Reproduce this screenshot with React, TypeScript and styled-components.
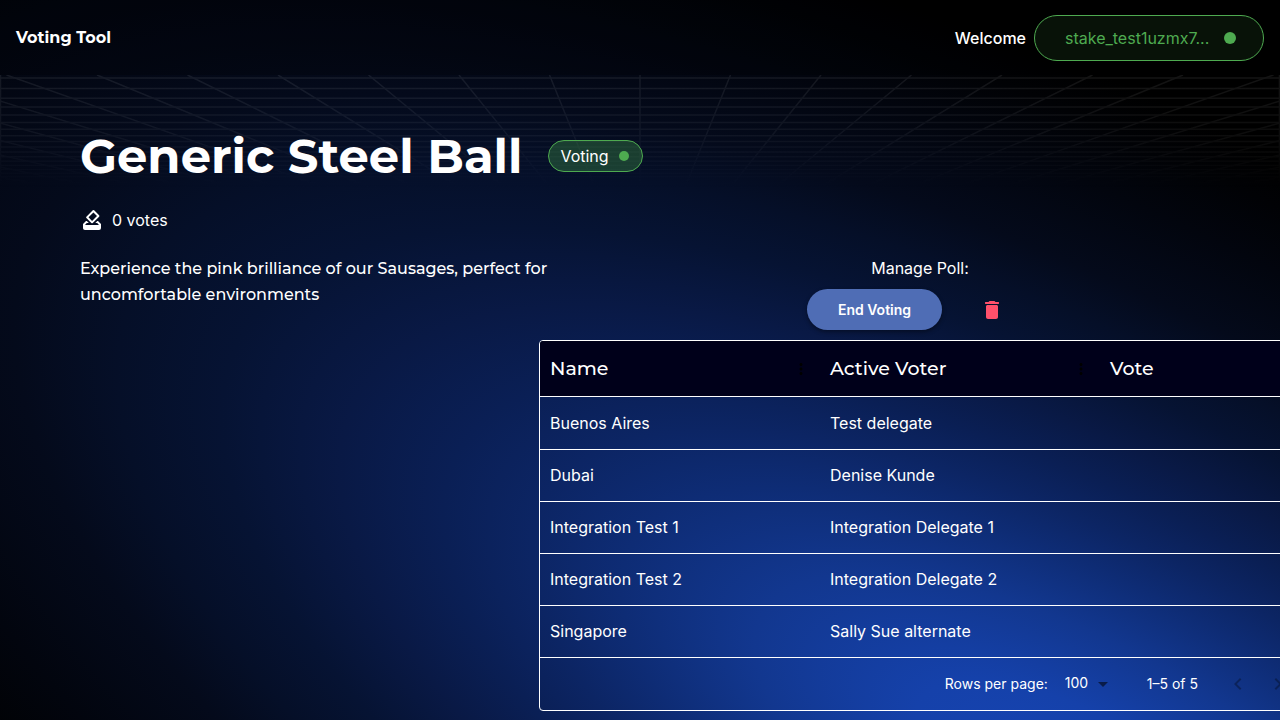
import React from 'react';
import styled, { createGlobalStyle } from 'styled-components';
import { MdHowToVote, MdChevronLeft, MdChevronRight, MdMoreVert } from 'react-icons/md';

const body = "Inter, 'Liberation Sans', sans-serif";
const display = "Montserrat, Inter, 'Liberation Sans', sans-serif";
const green = '#4eaa50';

const GlobalStyle = createGlobalStyle`
  *, *::before, *::after { box-sizing: border-box; }
  body {
    margin: 0;
    background: #000;
    color: #fff;
    font: 400 16px/24px ${body};
    overflow-x: hidden;
  }
  h1, p { margin: 0; }
  button, select { font: inherit; color: inherit; }
`;

const Page = styled.div`
  position: relative;
  isolation: isolate;
  display: flex;
  flex-direction: column;
  min-height: 100vh;
  overflow: hidden;
`;

const Glow = styled.svg`
  position: absolute;
  inset: 0;
  z-index: -2;
  width: 100%;
  height: 100%;
`;

const GridLines = styled.svg`
  position: absolute;
  top: 75px;
  left: 0;
  z-index: -1;
  width: 100%;
  height: 120px;
`;

const Header = styled.header`
  display: flex;
  align-items: center;
  justify-content: space-between;
  height: 75px;
  padding: 0 16px;
  background: rgba(0, 0, 0, 0.2);
`;

const Brand = styled.a`
  font: 700 16px/24px ${display};
  color: #fff;
  text-decoration: none;
`;

const Account = styled.div`
  display: flex;
  align-items: center;
  gap: 8px;
  font-weight: 500;
`;

const Dot = styled.span<{ $size: number }>`
  flex: none;
  width: ${({ $size }) => $size}px;
  height: ${({ $size }) => $size}px;
  border-radius: 50%;
  background: ${green};
`;

const WalletButton = styled.button`
  display: flex;
  align-items: center;
  justify-content: space-between;
  width: 230px;
  height: 46px;
  padding: 0 27px 0 30px;
  border: 1px solid ${green};
  border-radius: 23px;
  background: rgba(76, 175, 80, 0.1);
  color: ${green};
  font-weight: 400;
`;

const Main = styled.main`
  display: flex;
  flex-direction: column;
  padding: 49px 80px 8px;
`;

const TitleRow = styled.div`
  display: flex;
  align-items: center;
  gap: 26px;
`;

const Title = styled.h1`
  font: 700 48px/64px ${display};
`;

const Status = styled.span`
  display: flex;
  align-items: center;
  gap: 10px;
  height: 32px;
  padding: 0 13px 0 11px;
  border: 1px solid ${green};
  border-radius: 16px;
  background: rgba(76, 175, 80, 0.3);
`;

const Votes = styled.div`
  display: flex;
  align-items: center;
  gap: 8px;
  margin-top: 20px;
`;

const Columns = styled.div`
  display: grid;
  grid-template-columns: minmax(0, 1fr) minmax(0, 1fr);
  margin-top: 24px;
`;

const Description = styled.p`
  padding-right: 64px;
  font: 500 16px/26px ${display};
`;

const Manage = styled.section`
  display: flex;
  flex-direction: column;
  align-items: center;
`;

const Actions = styled.div`
  display: flex;
  align-items: center;
  gap: 9px;
  margin: 9px 0 10px;
`;

const EndButton = styled.button`
  height: 41px;
  padding: 0 31px;
  border: 0;
  border-radius: 21px;
  background: #4f6db5;
  box-shadow: 0 2px 4px rgba(0, 0, 0, 0.4);
  font-size: 14px;
  font-weight: 600;
`;

const DeleteButton = styled.button`
  display: grid;
  place-items: center;
  width: 82px;
  height: 40px;
  border: 0;
  background: none;
  color: #ff506b;
`;

const TableFrame = styled.div`
  flex: none;
  width: 762px;
  border: 1px solid #fff;
  border-radius: 4px;
  overflow: hidden;
`;

const Table = styled.table`
  width: 100%;
  table-layout: fixed;
  border-collapse: separate;
  border-spacing: 0;
`;

const HeadCell = styled.th<{ $wide?: boolean }>`
  width: ${({ $wide }) => ($wide ? '280px' : 'auto')};
  height: 56px;
  padding: 0 10px;
  border-bottom: 1px solid #fff;
  background: #00001a;
  text-align: left;
  font: 500 19px/24px ${display};
`;

const HeadContent = styled.div`
  display: flex;
  align-items: center;
  justify-content: space-between;
`;

const MenuIcon = styled(MdMoreVert)`
  color: #000;
`;

const Cell = styled.td<{ $first: boolean }>`
  height: ${({ $first }) => ($first ? 53 : 52)}px;
  padding: ${({ $first }) => ($first ? '0 10px' : '0 10px 2px')};
  border-bottom: 1px solid #fff;
`;

const Pagination = styled.div`
  display: flex;
  align-items: center;
  justify-content: flex-end;
  height: 52px;
  padding-right: 2px;
  font-size: 14px;
`;

const RowsLabel = styled.label`
  display: flex;
  align-items: center;
  gap: 17px;
`;

const SelectBox = styled.span`
  display: flex;
  align-items: center;
`;

const Select = styled.select`
  appearance: none;
  width: 26px;
  padding: 0 0 2px;
  border: 0;
  background: transparent;
`;

const Range = styled.span`
  margin: 0 20px 0 32px;
`;

const PageButton = styled.button`
  display: grid;
  place-items: center;
  width: 40px;
  height: 40px;
  padding: 0;
  border: 0;
  background: none;
  color: rgba(0, 0, 0, 0.3);
`;

const rows = [
  ['Buenos Aires', 'Test delegate'],
  ['Dubai', 'Denise Kunde'],
  ['Integration Test 1', 'Integration Delegate 1'],
  ['Integration Test 2', 'Integration Delegate 2'],
  ['Singapore', 'Sally Sue alternate'],
];

const horizon = 224;
const horizontals = Array.from({ length: 26 }, (_, n) => horizon - 1 / (0.004525 + 0.000228 * n));
const rays = Array.from({ length: 41 }, (_, n) => n - 20);

function Backdrop() {
  return (
    <>
      <Glow viewBox="0 0 1280 720" preserveAspectRatio="none" aria-hidden="true">
        <defs>
          <radialGradient
            id="glow"
            gradientUnits="userSpaceOnUse"
            cx="0"
            cy="0"
            r="1"
            gradientTransform="translate(1080 785) rotate(28) scale(1640 650)"
          >
            <stop offset="0" stopColor="#1745b4" />
            <stop offset="0.11" stopColor="#1541aa" />
            <stop offset="0.22" stopColor="#12378f" />
            <stop offset="0.31" stopColor="#0e2c75" />
            <stop offset="0.37" stopColor="#0c2564" />
            <stop offset="0.43" stopColor="#0a1f55" />
            <stop offset="0.5" stopColor="#091945" />
            <stop offset="0.58" stopColor="#061333" />
            <stop offset="0.65" stopColor="#050f28" />
            <stop offset="0.72" stopColor="#040a1b" />
            <stop offset="0.84" stopColor="#02050e" />
            <stop offset="0.93" stopColor="#010205" />
            <stop offset="1" stopColor="#000" />
          </radialGradient>
        </defs>
        <rect width="1280" height="720" fill="#000" />
        <rect width="1280" height="720" fill="url(#glow)" />
      </Glow>
      <GridLines viewBox="0 0 1280 120" preserveAspectRatio="none" aria-hidden="true">
        <defs>
          <linearGradient id="fade" x1="0" y1="0" x2="0" y2="1">
            <stop offset="0" stopColor="#fff" stopOpacity="0.08" />
            <stop offset="0.5" stopColor="#fff" stopOpacity="0.05" />
            <stop offset="0.95" stopColor="#fff" stopOpacity="0" />
          </linearGradient>
          <mask id="lines">
            <g stroke="#fff" strokeWidth="1.5" fill="none">
              {horizontals.map((y) => (
                <path key={y} d={`M0 ${y}H1280`} />
              ))}
              {rays.map((n) => (
                <path key={n} d={`M${640 + n * 90.5} 0L${640 + n * 42} 120`} />
              ))}
              <path d="M0.5 0V120M1279.5 0V120" />
            </g>
          </mask>
        </defs>
        <rect width="1280" height="120" fill="url(#fade)" mask="url(#lines)" />
      </GridLines>
    </>
  );
}

export default function App() {
  return (
    <Page>
      <GlobalStyle />
      <Backdrop />
      <Header>
        <Brand href="#">Voting Tool</Brand>
        <Account>
          Welcome
          <WalletButton type="button">
            stake_test1uzmx7...
            <Dot $size={12} />
          </WalletButton>
        </Account>
      </Header>
      <Main>
        <TitleRow>
          <Title>Generic Steel Ball</Title>
          <Status>
            Voting
            <Dot $size={10} />
          </Status>
        </TitleRow>
        <Votes>
          <MdHowToVote size={24} />
          0 votes
        </Votes>
        <Columns>
          <Description>
            Experience the pink brilliance of our Sausages, perfect for uncomfortable environments
          </Description>
          <Manage>
            <p>Manage Poll:</p>
            <Actions>
              <EndButton type="button">End Voting</EndButton>
              <DeleteButton type="button" aria-label="Delete poll">
                <svg width="24" height="24" viewBox="0 0 24 24" fill="currentColor">
                  <path d="M6 19c0 1.1.9 2 2 2h8c1.1 0 2-.9 2-2V8.500c0-.8-.7-1.500-1.500-1.500h-9C6.700 7 6 7.700 6 8.500V19zM18.500 4h-3l-1-1h-5l-1 1h-3C5.200 4 5 4.200 5 4.500v1c0 .3.2.5.5.5h13c.3 0 .5-.2.5-.5v-1c0-.3-.2-.5-.5-.5z" />
                </svg>
              </DeleteButton>
            </Actions>
            <TableFrame>
              <Table>
                <thead>
                  <tr>
                    <HeadCell $wide scope="col">
                      <HeadContent>
                        Name
                        <MenuIcon size={18} />
                      </HeadContent>
                    </HeadCell>
                    <HeadCell $wide scope="col">
                      <HeadContent>
                        Active Voter
                        <MenuIcon size={18} />
                      </HeadContent>
                    </HeadCell>
                    <HeadCell scope="col">Vote</HeadCell>
                  </tr>
                </thead>
                <tbody>
                  {rows.map(([name, voter], i) => (
                    <tr key={name}>
                      <Cell $first={i === 0}>{name}</Cell>
                      <Cell $first={i === 0}>{voter}</Cell>
                      <Cell $first={i === 0} />
                    </tr>
                  ))}
                </tbody>
              </Table>
              <Pagination>
                <RowsLabel>
                  Rows per page:
                  <SelectBox>
                    <Select defaultValue="100">
                      <option>100</option>
                    </Select>
                    <svg width="24" height="24" viewBox="0 0 24 24" fill="rgba(0, 0, 0, 0.54)">
                      <path d="M7 10l5 5 5-5z" />
                    </svg>
                  </SelectBox>
                </RowsLabel>
                <Range>1–5 of 5</Range>
                <PageButton type="button" disabled aria-label="Previous page">
                  <MdChevronLeft size={24} />
                </PageButton>
                <PageButton type="button" disabled aria-label="Next page">
                  <MdChevronRight size={24} />
                </PageButton>
              </Pagination>
            </TableFrame>
          </Manage>
        </Columns>
      </Main>
    </Page>
  );
}
